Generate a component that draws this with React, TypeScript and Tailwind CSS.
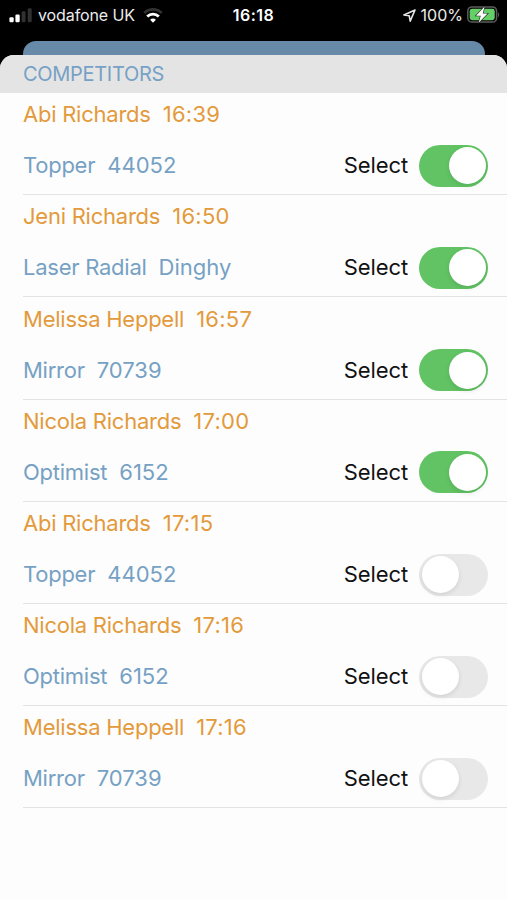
import clsx from "clsx";
import { useState } from "react";

interface Competitor {
  name: string;
  time: string;
  boat: string;
  sail: string;
  selected: boolean;
}

const COMPETITORS: Competitor[] = [
  { name: "Abi Richards", time: "16:39", boat: "Topper", sail: "44052", selected: true },
  { name: "Jeni Richards", time: "16:50", boat: "Laser Radial", sail: "Dinghy", selected: true },
  { name: "Melissa Heppell", time: "16:57", boat: "Mirror", sail: "70739", selected: true },
  { name: "Nicola Richards", time: "17:00", boat: "Optimist", sail: "6152", selected: true },
  { name: "Abi Richards", time: "17:15", boat: "Topper", sail: "44052", selected: false },
  { name: "Nicola Richards", time: "17:16", boat: "Optimist", sail: "6152", selected: false },
  { name: "Melissa Heppell", time: "17:16", boat: "Mirror", sail: "70739", selected: false },
];

function SignalIcon() {
  return (
    <svg width="23" height="15" viewBox="0 0 23 15" aria-hidden="true">
      <rect x="0.4" y="9.3" width="4.3" height="4.9" rx="1.2" fill="#fff" />
      <rect x="6.4" y="6.5" width="4.3" height="7.7" rx="1.2" fill="#fff" />
      <rect x="12.6" y="3.2" width="4" height="11" rx="1.2" fill="#303030" />
      <rect x="18.7" y="0.2" width="4" height="14" rx="1.2" fill="#303030" />
    </svg>
  );
}

function WifiIcon() {
  return (
    <svg width="20" height="15" viewBox="0 0 20 15" fill="none" aria-hidden="true">
      <path d="M1.2 4.9 A12.6 12.6 0 0 1 18.8 4.9" stroke="#303030" strokeWidth="2.8" />
      <path d="M4.2 8.6 A8.2 8.2 0 0 1 15.8 8.6" stroke="#fff" strokeWidth="2.8" />
      <path d="M10 14.8 L7.1 11.8 A4.3 4.3 0 0 1 12.9 11.8 Z" fill="#fff" />
    </svg>
  );
}

function LocationIcon() {
  return (
    <svg width="13" height="13" viewBox="0 0 13 13" fill="none" aria-hidden="true">
      <path
        d="M12 1 L0.9 6 L6.2 6.7 L7.2 12.1 Z"
        stroke="#e6e6e6"
        strokeWidth="1.6"
        strokeLinejoin="round"
      />
    </svg>
  );
}

function BatteryIcon() {
  return (
    <svg width="33" height="18" viewBox="0 0 33 18" aria-hidden="true">
      <rect x="0.8" y="0.9" width="28.8" height="15.2" rx="4.2" fill="#000" stroke="#5c5c5c" strokeWidth="1.5" />
      <rect x="2.7" y="2.8" width="25" height="11.4" rx="2.4" fill="#65cf67" />
      <path d="M31.1 6.2 C32.6 7 32.6 10.4 31.1 11.2 Z" fill="#5c5c5c" />
      <path
        d="M17.7 0.6 L9 9.7 L13.8 9.7 L11.6 16.8 L20.6 7.6 L15.7 7.6 Z"
        fill="#fff"
        stroke="#1c301c"
        strokeWidth="1.2"
        paintOrder="stroke"
      />
    </svg>
  );
}

function StatusBar() {
  return (
    <div className="grid h-[30px] grid-cols-[1fr_auto_1fr] items-center pr-[7px] pl-[9px] text-[16px] text-[#ececec]">
      <div className="flex items-center">
        <SignalIcon />
        <span className="ml-[6px] tracking-[-0.1px]">vodafone UK</span>
        <span className="ml-[8px]">
          <WifiIcon />
        </span>
      </div>
      <span className="mr-[2px] font-semibold tracking-[0.5px] text-white">16:18</span>
      <div className="flex items-center justify-end">
        <LocationIcon />
        <span className="ml-[5px]">100%</span>
        <span className="ml-[4px]">
          <BatteryIcon />
        </span>
      </div>
    </div>
  );
}

interface ToggleProps {
  label: string;
  checked: boolean;
  onChange: () => void;
}

function Toggle({ label, checked, onChange }: ToggleProps) {
  return (
    <button
      type="button"
      role="switch"
      aria-checked={checked}
      aria-label={label}
      onClick={onChange}
      className={clsx(
        "flex h-[42px] w-[69px] items-center rounded-full px-[2.5px]",
        checked ? "justify-end bg-[#61c364]" : "justify-start bg-[#e8e8e8]",
      )}
    >
      <span className="size-[37px] rounded-full bg-white shadow-[0_2px_5px_rgba(0,0,0,0.1)]" />
    </button>
  );
}

export default function App() {
  const [competitors, setCompetitors] = useState(COMPETITORS);

  function toggle(idx: number) {
    setCompetitors(
      competitors.map((c, i) => (i === idx ? { ...c, selected: !c.selected } : c)),
    );
  }

  return (
    <div className="flex h-[900px] w-[507px] flex-col overflow-hidden bg-black font-['Inter','Liberation_Sans',sans-serif]">
      <StatusBar />

      {/* Edge of the screen behind the sheet */}
      <div className="mr-[22px] ml-[23px] mt-[11px] h-[14px] shrink-0 rounded-t-[13px] bg-[#668aa8]" />

      {/* Sheet */}
      <div className="flex-1 overflow-hidden rounded-t-[14px] bg-[#fdfdfd]">
        <h1 className="flex h-[38px] items-center bg-[#e4e4e4] pl-[23px] text-[20px] tracking-[-0.3px] text-[#76a1c4]">
          COMPETITORS
        </h1>
        <ul>
          {competitors.map((c, idx) => (
            <li
              key={`${c.name}-${c.time}`}
              className="ml-[23px] h-[102.2px] border-b-[1.5px] border-[#e3e3e3] pr-[19px]"
            >
              <div className="flex h-[43.5px] items-center gap-[12px] text-[22px] text-[#e39a3b]">
                <span className="tracking-[-0.24px]">{c.name}</span>
                <span className="tracking-[0.25px]">{c.time}</span>
              </div>
              <div className="flex h-[58.5px] items-center text-[22px]">
                <div className="flex flex-1 gap-[12px] text-[#76a1c4]">
                  <span className="tracking-[-0.25px]">{c.boat}</span>
                  <span>{c.sail}</span>
                </div>
                <span className="mr-[11px] tracking-[-0.1px] text-[#111]">Select</span>
                <Toggle
                  label={`Select ${c.name}`}
                  checked={c.selected}
                  onChange={() => toggle(idx)}
                />
              </div>
            </li>
          ))}
        </ul>
      </div>
    </div>
  );
}
